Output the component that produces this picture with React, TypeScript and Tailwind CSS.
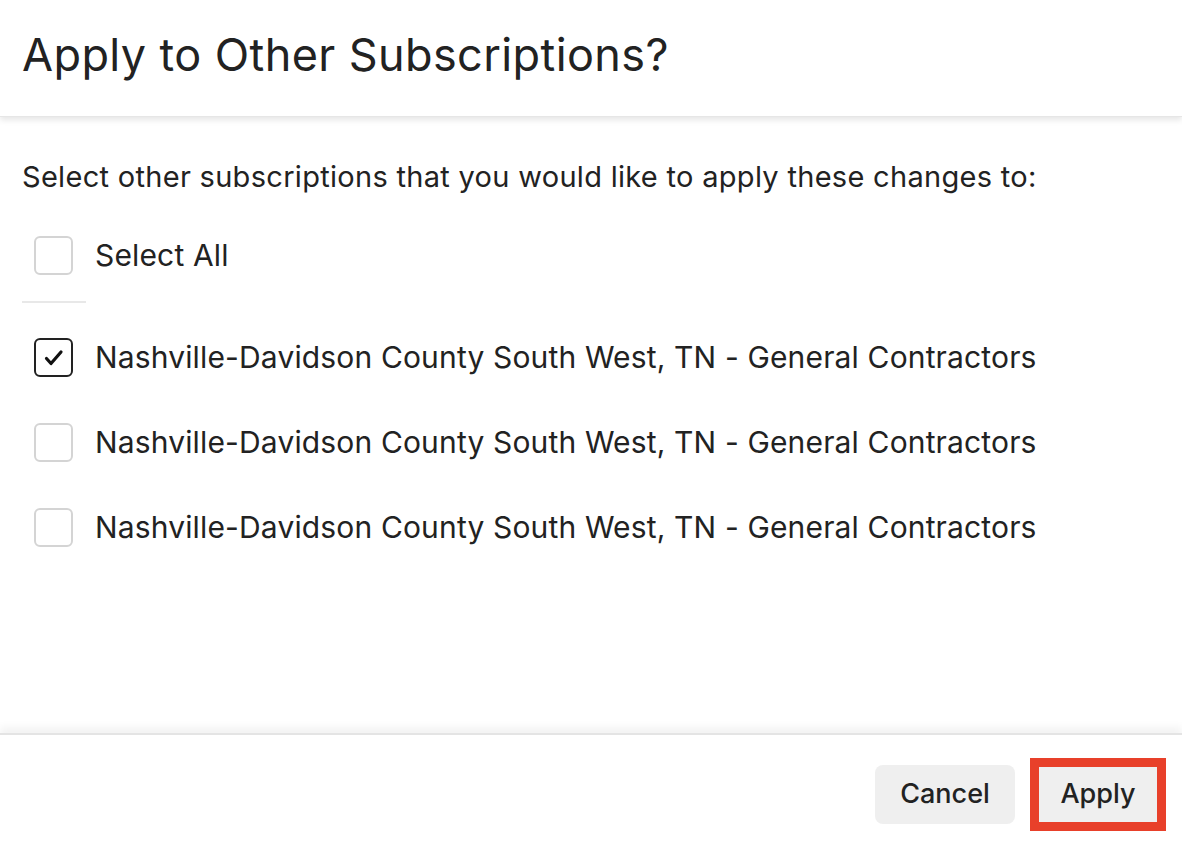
import React from "react";

function Box({ checked }: { checked?: boolean }) {
  return (
    <div
      className={
        "w-[39px] h-[39px] rounded-[6px] border-2 flex items-center justify-center shrink-0 " +
        (checked ? "border-[#222222]" : "border-[#d4d4d4]")
      }
    >
      {checked && (
        <svg width="24" height="24" viewBox="0 0 24 24" fill="none">
          <path d="M4.5 12.5l4.5 5 10-11.5" stroke="#111" strokeWidth="3.2" strokeLinecap="round" strokeLinejoin="round" />
        </svg>
      )}
    </div>
  );
}

export default function App() {
  const items = [true, false, false];
  return (
    <div
      className="w-[1182px] h-[846px] bg-white flex flex-col text-[#222222] overflow-hidden"
      style={{ fontFamily: "Inter, 'Noto Sans', sans-serif" }}
    >
      <div className="h-[117px] shrink-0 flex items-center px-[22px] relative z-10 shadow-[0_3px_6px_rgba(0,0,0,0.10)] border-b border-[#e6e6e6]">
        <h1 className="text-[45px] font-normal tracking-[0.4px] leading-none -mt-[8px]">
          Apply to Other Subscriptions?
        </h1>
      </div>
      <div className="flex-1 px-[22px] pt-[42px]">
        <p className="text-[29px] leading-[36px] tracking-[0.3px]">
          Select other subscriptions that you would like to apply these changes to:
        </p>
        <div className="flex items-center gap-[22px] pl-[12px] mt-[31px] h-[58px]">
          <Box />
          <span className="text-[30px] tracking-[0.15px]">Select All</span>
        </div>
        <div className="w-[64px] h-[2px] bg-[#e8e8e8] mt-[17px]" />
        <div className="flex flex-col mt-[12px]">
          {items.map((c, i) => (
            <div key={i} className="flex items-center gap-[22px] pl-[12px] h-[85px]">
              <Box checked={c} />
              <span className="text-[30px] tracking-[0.15px]">
                Nashville-Davidson County South West, TN - General Contractors
              </span>
            </div>
          ))}
        </div>
      </div>
      <div className="h-[113px] shrink-0 relative border-t-2 border-[#e4e4e4] shadow-[0_-6px_8px_rgba(0,0,0,0.05)] flex items-center justify-end pr-[16px] pt-[8px] gap-[15px]">
        <button className="w-[140px] h-[59px] rounded-[8px] bg-[#efefef] text-[27px] font-medium text-[#222]">
          Cancel
        </button>
        <div className="border-[9px] border-[#e8402a] p-0">
          <button className="w-[118px] h-[55px] bg-[#efefef] text-[27px] font-medium text-[#222]">
            Apply
          </button>
        </div>
      </div>
    </div>
  );
}
